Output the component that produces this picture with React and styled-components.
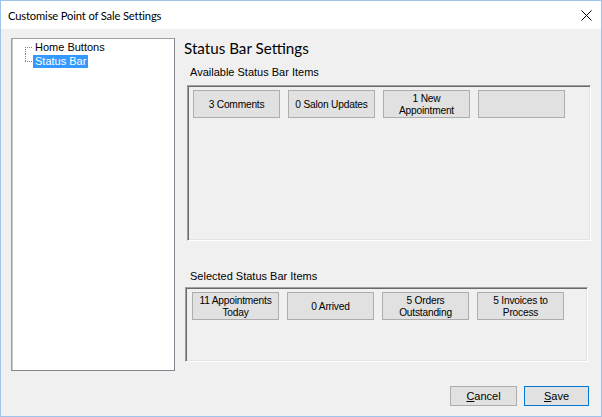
import React from "react";
import styled, { createGlobalStyle } from "styled-components";

const Global = createGlobalStyle`
  html, body { margin: 0; padding: 0; background: #f0f0f0; }
  * { box-sizing: border-box; }
`;

const Window = styled.div`
  width: 602px;
  height: 417px;
  border: 1px solid #9fc3ea;
  background: #f0f0f0;
  display: flex;
  flex-direction: column;
  font-family: "Liberation Sans", Arial, sans-serif;
  font-size: 11px;
  color: #000;
`;

const TitleBar = styled.div`
  height: 28px;
  background: #ffffff;
  display: flex;
  align-items: center;
  justify-content: space-between;
  padding: 0 8px 0 7px;
  flex-shrink: 0;
`;

const Title = styled.span`
  font-family: Lato, "Noto Sans", sans-serif;
  font-size: 11.2px;
  letter-spacing: -0.15px;
  color: #000;
`;

const CloseIcon = styled.svg`
  width: 11px;
  height: 11px;
  margin-right: 1px;
`;

const Body = styled.div`
  flex: 1;
  display: flex;
  flex-direction: column;
  padding: 9px 10px 0 10px;
`;

const Main = styled.div`
  display: grid;
  grid-template-columns: 164px 1fr;
  column-gap: 9px;
  height: 333px;
`;

const TreePanel = styled.div`
  background: #fff;
  border: 1px solid #828790;
  border-left-color: #a0a0a0;
  border-top-color: #a0a0a0;
  box-shadow: inset 1px 0 0 #c8c8c8;
  padding-top: 1px;
  display: flex;
  flex-direction: column;
`;

const TreeRow = styled.div`
  position: relative;
  height: 14px;
  display: flex;
  align-items: center;
  padding-left: 21px;

  &::before {
    content: "";
    position: absolute;
    left: 13px;
    top: 7px;
    width: 7px;
    border-top: 1px dotted #808080;
  }
  &::after {
    content: "";
    position: absolute;
    left: 13px;
    top: ${(p) => (p.$last ? "0" : "7px")};
    height: 7px;
    border-left: 1px dotted #808080;
  }
`;

const TreeLabel = styled.span`
  padding: 0 2px;
  line-height: 13px;
  height: 13px;
  background: ${(p) => (p.$selected ? "#3399ff" : "transparent")};
  color: ${(p) => (p.$selected ? "#fff" : "#000")};
`;

const Content = styled.div`
  display: flex;
  flex-direction: column;
`;

const Heading = styled.h1`
  margin: 0;
  font-family: Lato, "Noto Sans", sans-serif;
  font-weight: 400;
  font-size: 15.2px;
  line-height: 20px;
  height: 20px;
`;

const GroupLabel = styled.div`
  margin: ${(p) => p.$top}px 0 0 6px;
  line-height: 13px;
  height: 13px;
`;

const ItemBox = styled.div`
  margin: ${(p) => p.$top}px ${(p) => p.$right}px 0 ${(p) => p.$left}px;
  height: ${(p) => p.$height}px;
  border-top: 1px solid #a0a0a0;
  border-left: 1px solid #a0a0a0;
  border-right: 1px solid #ffffff;
  border-bottom: 1px solid #ffffff;
  box-shadow: inset 1px 1px 0 #696969, inset -1px -1px 0 #e3e3e3;
  padding: 4px 0 0 ${(p) => p.$padLeft}px;
  display: flex;
  align-items: flex-start;
  gap: 8px;
`;

const ItemButton = styled.div`
  width: 87px;
  height: 28px;
  background: #e1e1e1;
  border: 1px solid #adadad;
  display: flex;
  align-items: center;
  justify-content: center;
  text-align: center;
  line-height: 12px;
  padding-top: 1px;
  font-size: 10.2px;
  letter-spacing: -0.2px;
  white-space: pre-line;
`;

const Footer = styled.div`
  display: flex;
  justify-content: flex-end;
  gap: 7px;
  margin-top: 15px;
  padding-right: 2px;
`;

const DialogButton = styled.button`
  width: ${(p) => p.$width}px;
  height: 20px;
  background: #e1e1e1;
  border: 1px solid ${(p) => (p.$default ? "#0078d7" : "#adadad")};
  font-family: "Liberation Sans", Arial, sans-serif;
  font-size: 11px;
  color: #000;
  padding: 0;
  & u { text-decoration: underline; }
`;

const available = ["3 Comments", "0 Salon Updates", "1 New\nAppointment", ""];
const selected = ["11 Appointments\nToday", "0 Arrived", "5 Orders\nOutstanding", "5 Invoices to\nProcess"];

export default function App() {
  return (
    <>
      <Global />
      <Window>
        <TitleBar>
          <Title>Customise Point of Sale Settings</Title>
          <CloseIcon viewBox="0 0 11 11">
            <path d="M0.5 0.5 L10.5 10.5 M10.5 0.5 L0.5 10.5" stroke="#000" strokeWidth="1" fill="none" />
          </CloseIcon>
        </TitleBar>
        <Body>
          <Main>
            <TreePanel>
              <TreeRow>
                <TreeLabel>Home Buttons</TreeLabel>
              </TreeRow>
              <TreeRow $last>
                <TreeLabel $selected>Status Bar</TreeLabel>
              </TreeRow>
            </TreePanel>
            <Content>
              <Heading>Status Bar Settings</Heading>
              <GroupLabel $top={8}>Available Status Bar Items</GroupLabel>
              <ItemBox $top={6} $left={3} $right={0} $height={156} $padLeft={5}>
                {available.map((t, i) => (
                  <ItemButton key={i}>{t}</ItemButton>
                ))}
              </ItemBox>
              <GroupLabel $top={29}>Selected Status Bar Items</GroupLabel>
              <ItemBox $top={4} $left={1} $right={3} $height={75} $padLeft={6}>
                {selected.map((t, i) => (
                  <ItemButton key={i}>{t}</ItemButton>
                ))}
              </ItemBox>
            </Content>
          </Main>
          <Footer>
            <DialogButton $width={67}><u>C</u>ancel</DialogButton>
            <DialogButton $width={65} $default><u>S</u>ave</DialogButton>
          </Footer>
        </Body>
      </Window>
    </>
  );
}
